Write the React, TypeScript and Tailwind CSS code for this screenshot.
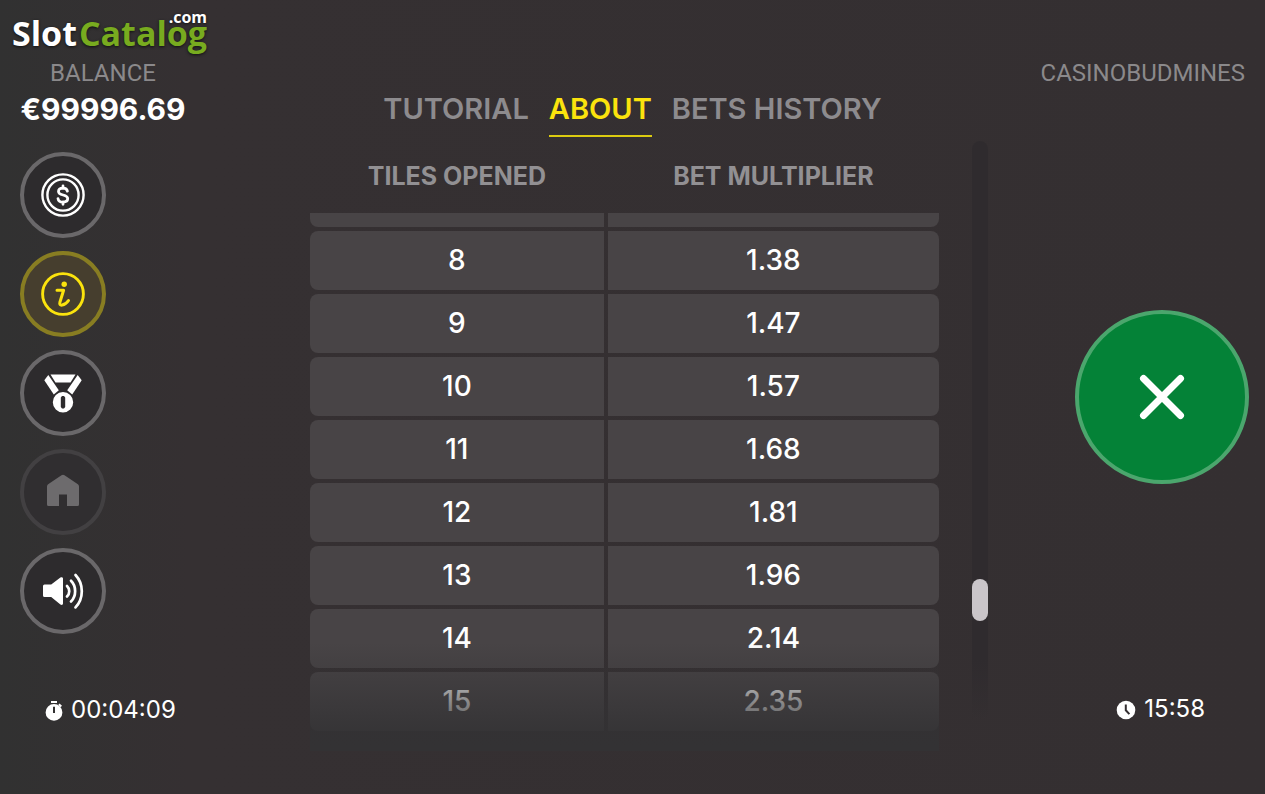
import { useState } from 'react';
import type { ReactNode } from 'react';

const rows = [
  { tiles: '8', multiplier: '1.38' },
  { tiles: '9', multiplier: '1.47' },
  { tiles: '10', multiplier: '1.57' },
  { tiles: '11', multiplier: '1.68' },
  { tiles: '12', multiplier: '1.81' },
  { tiles: '13', multiplier: '1.96' },
  { tiles: '14', multiplier: '2.14' },
  { tiles: '15', multiplier: '2.35' },
];

const tabs = ['TUTORIAL', 'ABOUT', 'BETS HISTORY'];

function Logo() {
  return (
    <a
      href="#"
      className="relative flex gap-[2px] self-start pl-3 pt-2 pb-px font-['Open_Sans',sans-serif] text-[34px] leading-[50px] font-bold [text-shadow:0_1px_3px_#111]"
    >
      <span className="text-white">Slot</span>
      <span className="text-[#78ab1f]">Catalog</span>
      <span className="absolute top-[7px] right-0 text-base leading-5 text-white">.com</span>
    </a>
  );
}

function CoinIcon() {
  return (
    <svg viewBox="0 0 44 44" className="size-11" fill="none" stroke="currentColor" strokeWidth="2.4" aria-hidden="true">
      <circle cx="22" cy="22" r="20.6" />
      <circle cx="22" cy="22" r="15.6" />
      <path d="M26.400 18.200c-.3-2-1.900-3.100-4.400-3.100-2.700 0-4.500 1.200-4.500 3.300 0 4.800 9.200 2.400 9.200 7.200 0 2.300-2 3.500-4.700 3.500s-4.700-1.300-5-3.500M22 13v2.300M22 28.800v2.500" strokeWidth="2.800" strokeLinecap="round" />
    </svg>
  );
}

function InfoIcon() {
  return (
    <svg viewBox="0 0 44 44" className="size-11" fill="none" stroke="currentColor" aria-hidden="true">
      <circle cx="22" cy="22" r="20.400" strokeWidth="2.900" />
      <path d="M16 18.300h6.600l-3.700 11.900c-.6 2.200.4 3.200 2.200 2.900 2.500-.4 5-2.400 6.400-4.600" strokeWidth="3" strokeLinecap="round" strokeLinejoin="round" />
      <circle cx="23.200" cy="12.300" r="2.700" fill="currentColor" stroke="none" />
    </svg>
  );
}

function MedalIcon() {
  return (
    <svg viewBox="0 0 44 44" className="size-11" fill="currentColor" aria-hidden="true">
      <path d="M9.500 3.500h25l-5 8h-15Z" />
      <path d="M7.300 4 3.300 9.300 12.800 23.500l5-4.300Z" />
      <path d="M36.700 4l4 5.300-9.500 14.200-5-4.300Z" />
      <path fillRule="evenodd" d="M22 21a10.200 10.200 0 1 1 0 20.400A10.200 10.200 0 0 1 22 21Zm-1 4-1.200 1.500v9.400l1.200 1.500h2l1.200-1.500v-9.400L23 25Z" />
    </svg>
  );
}

function HomeIcon() {
  return (
    <svg viewBox="0 0 44 44" className="size-11" fill="currentColor" aria-hidden="true">
      <path d="M20.500 5.200a2.500 2.500 0 0 1 3 0l13 8.800c1 .7 1.500 1.500 1.500 2.700v17.800a1.500 1.500 0 0 1-1.500 1.500H26V24.500h-8V36H7.500A1.500 1.500 0 0 1 6 34.500V16.700c0-1.200.5-2 1.500-2.700Z" />
    </svg>
  );
}

function SoundIcon() {
  return (
    <svg viewBox="0 0 44 44" className="size-11" fill="none" stroke="currentColor" strokeWidth="2.700" strokeLinecap="round" aria-hidden="true">
      <path fill="currentColor" stroke="none" d="M3.500 15.500h6.700L19.400 8.600c1.300-.9 2.600-.4 2.600 1v25c0 1.400-1.300 1.900-2.600 1l-9.200-7.700H3.500A1.500 1.500 0 0 1 2 26.400V17a1.500 1.500 0 0 1 1.500-1.500Z" />
      <path d="M26 17c3 3 3 7.500 0 10.500M30 11.800c5.500 5.500 5.500 15.200 0 20.700M34.500 6c8.400 9 8.400 23.400 0 32.400" />
    </svg>
  );
}

function RoundButton({ label, tone, children }: { label: string; tone: string; children: ReactNode }) {
  return (
    <button
      type="button"
      aria-label={label}
      disabled={label === 'Home'}
      className={`flex size-[86px] items-center justify-center rounded-full border-4 ${tone}`}
    >
      {children}
    </button>
  );
}

const normalTone = 'border-[#6a686a] bg-[#2d2b2d] text-white';

export default function App() {
  const [active, setActive] = useState('ABOUT');

  return (
    <div className="flex min-h-screen bg-linear-to-r from-[#313131] via-[#353032] via-15% to-[#342f31] font-[Inter,sans-serif] text-white">
      <aside className="flex w-[210px] shrink-0 flex-col">
        <Logo />
        <div className="flex flex-col items-center pr-1">
          <span className="font-[Roboto,sans-serif] text-2xl leading-7 text-[#8b898b]">BALANCE</span>
          <span className="text-[30px] leading-[44px] font-bold">€99996.69</span>
        </div>
        <nav className="mt-[21px] flex flex-col gap-[13px] pl-5">
          <RoundButton label="Bet" tone={normalTone}><CoinIcon /></RoundButton>
          <RoundButton label="Info" tone="border-[#887d22] bg-[#463e2e] text-[#fbe30d]"><InfoIcon /></RoundButton>
          <RoundButton label="Leaderboard" tone={normalTone}><MedalIcon /></RoundButton>
          <RoundButton label="Home" tone="border-[#424042] bg-[#302e30] text-[#6d6b6d]"><HomeIcon /></RoundButton>
          <RoundButton label="Sound" tone={normalTone}><SoundIcon /></RoundButton>
        </nav>
        <div className="mt-auto flex items-center gap-2 pb-[70px] pl-[45px]">
          <svg viewBox="0 0 18 20" className="mt-[2px] h-5 w-[18px]" fill="currentColor" aria-hidden="true">
            <path d="M6 0h6v2H6ZM14.500 2.500l2.500 2.200-1.400 1.500-2.400-2.200Z" />
            <path fillRule="evenodd" d="M9 3a8.400 8.400 0 1 1 0 16.800A8.400 8.400 0 0 1 9 3ZM8 5.800v6.300h2V5.800Z" />
          </svg>
          <time className="text-2xl leading-7">00:04:09</time>
        </div>
      </aside>

      <main className="flex min-w-0 flex-1 flex-col pt-[91px]">
        <div role="tablist" className="flex justify-center gap-5">
          {tabs.map((tab) => (
            <button
              key={tab}
              type="button"
              role="tab"
              aria-selected={tab === active}
              onClick={() => setActive(tab)}
              className={`border-b-2 pb-2 text-[29px] leading-9 font-semibold ${
                tab === active ? 'border-[#dccb10] text-[#fbe30d]' : 'border-transparent text-[#8d8b8e]'
              }`}
            >
              {tab}
            </button>
          ))}
        </div>

        <div className="mt-1 flex gap-[29px] pr-[67px] pl-24">
          <div className="relative flex-1 pb-4">
            <table className="w-full table-fixed border-separate border-spacing-1 text-center">
              <colgroup>
                <col className="w-[47%]" />
                <col />
              </colgroup>
              <thead>
                <tr className="text-[25px] leading-8 text-[#929093]">
                  <th className="h-16 pb-[2px] font-bold">TILES OPENED</th>
                  <th className="h-16 pb-[2px] font-bold">BET MULTIPLIER</th>
                </tr>
              </thead>
              <tbody className="text-[28px] leading-8 font-medium">
                <tr aria-hidden="true">
                  <td className="h-[14px] rounded-bl-lg bg-[#484446]" />
                  <td className="h-[14px] rounded-br-lg bg-[#484446]" />
                </tr>
                {rows.map((row) => (
                  <tr key={row.tiles}>
                    <td className="h-[59px] rounded-l-lg bg-[#484446] pb-[2px]">{row.tiles}</td>
                    <td className="h-[59px] rounded-r-lg bg-[#484446] pb-[2px]">{row.multiplier}</td>
                  </tr>
                ))}
              </tbody>
            </table>
            <div className="pointer-events-none absolute inset-x-1 bottom-0 h-[108px] bg-linear-to-b from-[#333234]/0 to-[#333234] to-95%" />
          </div>
          <div className="flex w-4 flex-col justify-end rounded-lg bg-linear-to-b from-[#2f2b2e] from-85% to-[#2f2b2e]/0 to-95%">
            <div className="mb-[130px] h-[42px] rounded-full bg-[#cac5c9]" />
          </div>
        </div>
      </main>

      <aside className="flex w-[210px] shrink-0 flex-col items-end pr-4">
        <div className="h-[99px] pt-[59px] pr-1 font-[Roboto,sans-serif] text-2xl leading-7 text-[#8b898b]">
          CASINOBUDMINES
        </div>
        <div className="flex flex-1 items-center">
          <button
            type="button"
            aria-label="Close"
            className="flex size-[174px] items-center justify-center rounded-full border-4 border-[#4ba66d] bg-[#048237]"
          >
            <svg viewBox="0 0 46 46" className="size-[46px]" stroke="currentColor" strokeWidth="7" strokeLinecap="round" aria-hidden="true">
              <path d="M4.500 4.500l37 37M41.500 4.500l-37 37" />
            </svg>
          </button>
        </div>
        <div className="flex h-[99px] items-start gap-2 pr-11">
          <svg viewBox="0 0 20 20" className="mt-[5px] size-5" aria-hidden="true">
            <circle cx="10" cy="10" r="9.300" fill="currentColor" />
            <path d="M9.800 4.500v5.800l3.600 3.800" fill="none" stroke="#342f31" strokeWidth="2" />
          </svg>
          <time className="text-2xl leading-7">15:58</time>
        </div>
      </aside>
    </div>
  );
}
